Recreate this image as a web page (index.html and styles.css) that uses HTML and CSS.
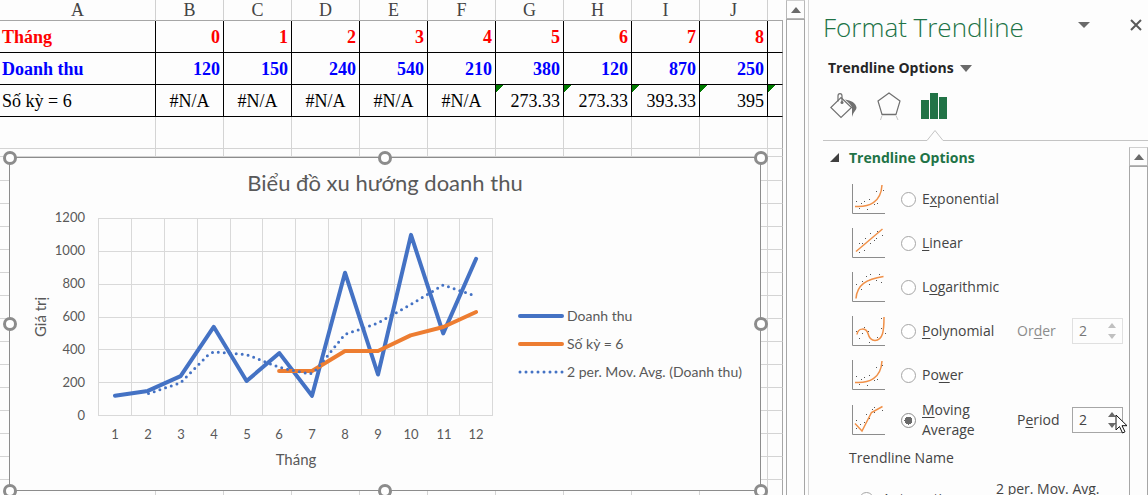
FILE: index.html
```html
<!DOCTYPE html>
<html lang="vi">
<head>
<meta charset="utf-8">
<title>Format Trendline</title>
<link rel="stylesheet" href="styles.css">
</head>
<body>
<div class="app">
  <main class="sheet">
    <table class="grid">
      <colgroup><col class="col-a"><col class="col"><col class="col"><col class="col"><col class="col"><col class="col"><col class="col"><col class="col"><col class="col"><col class="col"><col></colgroup>
      <thead>
        <tr><th>A</th><th>B</th><th>C</th><th>D</th><th>E</th><th>F</th><th>G</th><th>H</th><th>I</th><th>J</th><th></th></tr>
      </thead>
      <tbody>
        <tr class="data month"><td>Tháng</td><td>0</td><td>1</td><td>2</td><td>3</td><td>4</td><td>5</td><td>6</td><td>7</td><td>8</td><td></td></tr>
        <tr class="data revenue"><td>Doanh thu</td><td>120</td><td>150</td><td>240</td><td>540</td><td>210</td><td>380</td><td>120</td><td>870</td><td>250</td><td></td></tr>
        <tr class="data average"><td>Số kỳ = 6</td><td class="na">#N/A</td><td class="na">#N/A</td><td class="na">#N/A</td><td class="na">#N/A</td><td class="na">#N/A</td><td class="flag">273.33</td><td class="flag">273.33</td><td class="flag">393.33</td><td class="flag">395</td><td class="flag"></td></tr>
        <tr class="tall"><td></td><td></td><td></td><td></td><td></td><td></td><td></td><td></td><td></td><td></td><td></td></tr>
        <tr class="thin"><td></td><td></td><td></td><td></td><td></td><td></td><td></td><td></td><td></td><td></td><td></td></tr>
        <tr class="first"><td></td><td></td><td></td><td></td><td></td><td></td><td></td><td></td><td></td><td></td><td></td></tr>
        <tr><td></td><td></td><td></td><td></td><td></td><td></td><td></td><td></td><td></td><td></td><td></td></tr>
        <tr><td></td><td></td><td></td><td></td><td></td><td></td><td></td><td></td><td></td><td></td><td></td></tr>
        <tr><td></td><td></td><td></td><td></td><td></td><td></td><td></td><td></td><td></td><td></td><td></td></tr>
        <tr><td></td><td></td><td></td><td></td><td></td><td></td><td></td><td></td><td></td><td></td><td></td></tr>
        <tr><td></td><td></td><td></td><td></td><td></td><td></td><td></td><td></td><td></td><td></td><td></td></tr>
        <tr><td></td><td></td><td></td><td></td><td></td><td></td><td></td><td></td><td></td><td></td><td></td></tr>
        <tr><td></td><td></td><td></td><td></td><td></td><td></td><td></td><td></td><td></td><td></td><td></td></tr>
        <tr><td></td><td></td><td></td><td></td><td></td><td></td><td></td><td></td><td></td><td></td><td></td></tr>
        <tr><td></td><td></td><td></td><td></td><td></td><td></td><td></td><td></td><td></td><td></td><td></td></tr>
        <tr><td></td><td></td><td></td><td></td><td></td><td></td><td></td><td></td><td></td><td></td><td></td></tr>
        <tr><td></td><td></td><td></td><td></td><td></td><td></td><td></td><td></td><td></td><td></td><td></td></tr>
        <tr><td></td><td></td><td></td><td></td><td></td><td></td><td></td><td></td><td></td><td></td><td></td></tr>
        <tr><td></td><td></td><td></td><td></td><td></td><td></td><td></td><td></td><td></td><td></td><td></td></tr>
        <tr><td></td><td></td><td></td><td></td><td></td><td></td><td></td><td></td><td></td><td></td><td></td></tr>
      </tbody>
    </table>

    <section class="chart" aria-label="Biểu đồ xu hướng doanh thu">
      <h1 class="chart-title">Biểu đồ xu hướng doanh thu</h1>
      <div class="chart-body">
        <svg class="plot" width="486" height="276" viewBox="10 200 486 276" role="img" aria-label="Doanh thu">
          <path class="lines" d="M98.5 218v198M131.5 218v198M164.5 218v198M197.5 218v198M230.5 218v198M262.5 218v198M295.5 218v198M328.5 218v198M361.5 218v198M394.5 218v198M427.5 218v198M459.5 218v198M492.5 218v198M98 218.5h395M98 251.5h395M98 284.5h395M98 317.5h395M98 349.5h395M98 382.5h395M98 415.5h395"/>
          <g class="tick end">
            <text x="85" y="222">1200</text><text x="85" y="255">1000</text><text x="85" y="288">800</text><text x="85" y="321">600</text><text x="85" y="354">400</text><text x="85" y="387">200</text><text x="85" y="420">0</text>
          </g>
          <g class="tick mid">
            <text x="115" y="439">1</text><text x="148" y="439">2</text><text x="181" y="439">3</text><text x="214" y="439">4</text><text x="247" y="439">5</text><text x="279" y="439">6</text><text x="312" y="439">7</text><text x="345" y="439">8</text><text x="378" y="439">9</text><text x="411" y="439">10</text><text x="444" y="439">11</text><text x="476" y="439">12</text>
          </g>
          <text class="axis" x="296" y="465">Tháng</text>
          <text class="axis" transform="translate(46 317) rotate(-90)">Giá trị</text>
          <polyline class="series blue" points="115,395.8 147.8,390.9 180.6,376.1 213.7,326.8 246.6,381 279.4,353.1 312,395.8 345,272.7 378,374.5 411,234.9 443.2,333.4 476.1,258.8"/>
          <polyline class="series orange" points="279.1,371 312,371 345,351 378,351 410.6,335.4 443.3,327 476.1,312"/>
          <polyline class="series dots" points="148.5,393.6 180.6,382.8 208,355 214,351.8 246.3,354.5 279.1,367.3 310,374 316,370 344.8,334.5 377.6,323.2 410.4,304.7 443.2,285 476.1,296.2"/>
        </svg>
        <ul class="legend">
          <li><svg width="46" height="6" viewBox="0 0 46 6"><path class="series blue" d="M2 3h42"/></svg>Doanh thu</li>
          <li><svg width="46" height="6" viewBox="0 0 46 6"><path class="series orange" d="M2 3h42"/></svg>Số kỳ = 6</li>
          <li><svg width="46" height="6" viewBox="0 0 46 6"><path class="series dots" d="M2 3h43"/></svg>2 per. Mov. Avg. (Doanh thu)</li>
        </ul>
      </div>
      <i class="handle top left"></i><i class="handle top center"></i><i class="handle top right"></i>
      <i class="handle middle left"></i><i class="handle middle right"></i>
      <i class="handle bottom left"></i><i class="handle bottom center"></i><i class="handle bottom right"></i>
    </section>
  </main>

  <div class="scrollbar">
    <button type="button" class="scroll-up" aria-label="Scroll sheet up"><svg width="10" height="6" viewBox="0 0 10 6"><path d="M5 0l5 6H0z"/></svg></button>
    <div class="thumb"></div>
  </div>

  <aside class="pane">
    <header class="pane-head">
      <h2>Format Trendline</h2>
      <button type="button" class="menu" aria-label="Task pane options"><svg width="12" height="6" viewBox="0 0 12 6"><path d="M0 0h12L6 6z"/></svg></button>
      <button type="button" class="close" aria-label="Close"><svg width="12" height="12" viewBox="0 0 12 12"><path d="M1 1l10 10M11 1L1 11"/></svg></button>
    </header>
    <button type="button" class="picker">Trendline Options<svg width="12" height="7" viewBox="0 0 12 7"><path d="M0 0h12L6 7z"/></svg></button>
    <nav class="tabs">
      <button type="button" class="tab" aria-label="Fill &amp; Line">
        <svg width="27" height="28" viewBox="0 0 27 28"><g fill="none" stroke="#707070" stroke-width="1.2"><path d="M11 5.500L21.500 15.500 11 25.500.800 15.500z"/><path d="M8 9.500V4C8 .8 12 .8 12 4V10"/></g><circle cx="12" cy="10.500" r="1.500" fill="#707070"/><path d="M15 7.500c6 .8 11 3.500 11.500 8 0 3-3 4-4.500 9.500V15.500c-1-3-4-5-7-8z" fill="#707070"/></svg>
      </button>
      <button type="button" class="tab" aria-label="Effects">
        <svg width="26" height="28" viewBox="0 0 26 28"><path d="M13 1l11 8-4 13.500H6L2 9z" fill="none" stroke="#707070" stroke-width="1.200"/><path d="M6 22.500h14" stroke="#707070" stroke-width="1.500"/><path d="M6 23.500L4.500 28M20 23.500l2 4.500" stroke="#c4c4c4" fill="none"/></svg>
      </button>
      <button type="button" class="tab" aria-label="Trendline Options">
        <svg width="26" height="28" viewBox="0 0 26 28"><path d="M0 8h8v19H0zM9 1h8v26H9zM18 5h8v22h-8z" fill="#217346"/></svg>
      </button>
      <svg class="notch" width="18" height="12" viewBox="0 0 18 12"><path d="M0 11.500h1L9 1.500l8 10h1" /></svg>
    </nav>
    <div class="pane-body">
      <form class="options">
        <h3><svg width="10" height="10" viewBox="0 0 10 10"><path d="M9 0v9H0z"/></svg>Trendline Options</h3>
        <div class="option">
          <svg class="thumbnail" width="34" height="30" viewBox="0 0 34 30"><path class="frame" d="M.5 0v29.500H33"/><path class="curve" d="M3 22.500c14 1 26-4 27-21.500"/><path class="specks" d="M4 17.500h1M9 19.500h1M12 17.500h1M17 15.500h1M24 7.500h1M31 6.500h1M22 20.500h1M25 19.500h1M7 24.500h1M15 25.500h1"/></svg>
          <label><input type="radio" name="type"><span>E<u>x</u>ponential</span></label>
        </div>
        <div class="option">
          <svg class="thumbnail" width="34" height="30" viewBox="0 0 34 30"><path class="frame" d="M.5 0v29.500H33"/><path class="curve" d="M4 23.500L30.500 1"/><path class="specks" d="M7 15.500h1M10 15.500h1M13 10.500h1M18 5.500h1M25 3.500h1M30 7.500h1M24 10.500h1M22 12.500h1M18 15.500h1M12 22.500h1M7 24.500h1"/></svg>
          <label><input type="radio" name="type"><span><u>L</u>inear</span></label>
        </div>
        <div class="option">
          <svg class="thumbnail" width="34" height="30" viewBox="0 0 34 30"><path class="frame" d="M.5 0v29.500H33"/><path class="curve" d="M4 26.500C5 13 14 7 31.500 4.500"/><path class="specks" d="M4 12.500h1M10 9.500h1M14 4.500h1M18 2.500h1M27 2.500h1M29 10.500h1M24 8.500h1M17 12.500h1M9 17.500h1"/></svg>
          <label><input type="radio" name="type"><span>L<u>o</u>garithmic</span></label>
        </div>
        <div class="option">
          <svg class="thumbnail" width="34" height="30" viewBox="0 0 34 30"><path class="frame" d="M.5 0v29.500H33"/><path class="curve" d="M5 18.500c1-7 9-7 11-1 1 4 3 7 7 7 8 0 9-10 9-23.500"/><path class="specks" d="M4 15.500h1M12 11.500h1M16 15.500h1M10 17.500h1M7 22.500h1M17 26.500h1M25 21.500h1M29 12.500h1M29 2.500h1M33 17.500h1"/></svg>
          <label><input type="radio" name="type"><span><u>P</u>olynomial</span></label>
          <label class="amount off" for="order">Or<u>d</u>er</label>
          <div class="spinner off"><input id="order" type="text" value="2" disabled><div class="steps"><button type="button" disabled aria-label="Increase order"><svg width="8" height="5" viewBox="0 0 8 5"><path d="M4 0l4 5H0z"/></svg></button><button type="button" disabled aria-label="Decrease order"><svg width="8" height="5" viewBox="0 0 8 5"><path d="M0 0h8L4 5z"/></svg></button></div></div>
        </div>
        <div class="option">
          <svg class="thumbnail" width="34" height="30" viewBox="0 0 34 30"><path class="frame" d="M.5 0v29.500H33"/><path class="curve" d="M3 22.500c14 1 26-4 27-21.500"/><path class="specks" d="M4 16.500h1M9 19.500h1M12 17.500h1M17 15.500h1M24 7.500h1M30 5.500h1M22 20.500h1M25 19.500h1M7 24.500h1M15 25.500h1"/></svg>
          <label><input type="radio" name="type"><span>Po<u>w</u>er</span></label>
        </div>
        <div class="option two-line">
          <svg class="thumbnail" width="34" height="30" viewBox="0 0 34 30"><path class="frame" d="M.5 0v29.500H33"/><path class="curve" d="M3 18.500l7 7.500L19.500 7.500 30.500 1.500"/><path class="specks" d="M4 15.500h1M4 23.500h1M8 19.500h1M12 17.500h1M14 9.500h1M20 4.500h1M22 2.500h1M30 5.500h1M22 7.500h1M17 13.500h1"/></svg>
          <label><input type="radio" name="type" checked><span><u>M</u>oving Average</span></label>
          <label class="amount" for="period">P<u>e</u>riod</label>
          <div class="spinner"><input id="period" type="text" value="2"><div class="steps"><button type="button" aria-label="Increase period"><svg width="8" height="5" viewBox="0 0 8 5"><path d="M4 0l4 5H0z"/></svg></button><button type="button" aria-label="Decrease period"><svg width="8" height="5" viewBox="0 0 8 5"><path d="M0 0h8L4 5z"/></svg></button></div>
            <svg class="cursor" width="13" height="20" viewBox="0 0 13 20"><path d="M1 1v15l3.500-3.500L7.500 19l2.500-1.200-3-6.100h5z" fill="#fff" stroke="#111"/></svg>
          </div>
        </div>
        <h4>Trendline Name</h4>
        <div class="name-row">
          <label><input type="radio" name="name"><span><u>A</u>utomatic</span></label>
          <span class="name">2 per. Mov. Avg. (Doanh thu)</span>
        </div>
      </form>
      <div class="scrollbar side">
        <button type="button" class="scroll-up" aria-label="Scroll options up"><svg width="10" height="6" viewBox="0 0 10 6"><path d="M5 0l5 6H0z"/></svg></button>
        <div class="thumb"></div>
      </div>
    </div>
  </aside>
</div>
</body>
</html>
```
FILE: styles.css
```css
* { box-sizing: border-box; }
body { margin: 0; background: #fdfdfd; color: #444; font-family: "Open Sans", "Noto Sans", sans-serif; font-size: 14px; }
h1, h2, h3, h4, ul { margin: 0; padding: 0; font-weight: normal; }
button { border: 0; padding: 0; background: none; font: inherit; color: inherit; display: flex; align-items: center; justify-content: center; }
svg { display: block; flex: none; }
u { text-underline-offset: 2px; }

.app { display: flex; height: 100vh; overflow: hidden; }

/* worksheet */
.sheet { position: relative; flex: 1; min-width: 0; overflow: hidden; }
.grid { width: 100%; table-layout: fixed; border-collapse: separate; border-spacing: 0; font-family: "Liberation Serif", serif; font-size: 18px; line-height: 20px; }
.col-a { width: 156px; }
.col { width: 68px; }
.grid th { height: 21px; padding: 0; font-weight: normal; border-right: 1px solid #d0d0d0; border-bottom: 1px solid #a6a6a6; }
.grid td { height: 23px; padding: 0; border-right: 1px solid #d4d4d4; border-bottom: 1px solid #d4d4d4; }
.grid th:last-child { border-right: 0; }
.grid td:last-child { border-right-color: #a6a6a6; }
.grid .tall td { height: 32px; }
.grid .thin td { height: 8px; }
.grid .first td { height: 24px; }
.grid .data td { height: 32px; padding: 0 3px; border-color: #000; text-align: right; color: #000; }
.grid .data td:last-child { border-right-color: #a6a6a6; }
.grid .data td:first-child { padding: 0 2px; text-align: left; }
.grid .month td, .grid .revenue td { font-weight: bold; }
.grid .month td { color: #f00; }
.grid .revenue td { color: #00f; }
.grid .data .na { text-align: center; }
.grid .flag { background: linear-gradient(135deg, #007a00 5px, transparent 5px) no-repeat; }

/* chart floating over the cells */
.chart { position: absolute; left: 9px; top: 157px; right: 22px; height: 334px; background: #fdfdfd; border: 1px solid #8c8c8c; color: #595959; font-family: Lato, "Open Sans", sans-serif; display: flex; flex-direction: column; }
.chart-title { padding: 10px 0 2px; font-size: 22px; line-height: 30px; text-align: center; }
.chart-body { display: flex; gap: 22px; }
.plot { overflow: visible; }
.lines { stroke: #d9d9d9; fill: none; }
.tick { font-size: 13px; fill: #595959; }
.end { text-anchor: end; }
.mid { text-anchor: middle; }
.axis { font-size: 15px; fill: #595959; text-anchor: middle; }
.series { fill: none; stroke-width: 4; stroke-linecap: round; stroke-linejoin: round; }
.blue { stroke: #4472c4; }
.orange { stroke: #ed7d31; }
.dots { stroke: #4472c4; stroke-width: 3; stroke-dasharray: 0 6; }
.legend { list-style: none; padding-top: 102px; font-size: 14px; line-height: 28px; white-space: nowrap; }
.legend li { display: flex; align-items: center; gap: 3px; }
.handle { position: absolute; width: 14px; height: 14px; border: 3px solid #8c8c8c; border-radius: 50%; background: #fff; }
.top { top: -7px; }
.middle { top: calc(50% - 7px); }
.bottom { bottom: -8px; }
.left { left: -7px; }
.center { left: calc(50% - 7px); }
.right { right: -8px; }

/* scrollbars */
.scrollbar { display: flex; flex-direction: column; width: 19px; margin: 0 3px; }
.scroll-up { height: 19px; border: 1px solid #b8b8b8; border-top-color: #d0d0d0; fill: #6a6a6a; }
.thumb { flex: 1; border: 1px solid #a6a6a6; border-bottom: 0; }
.side { margin: 6px 0 0; }

/* task pane */
.pane { display: flex; flex-direction: column; width: 340px; padding-left: 14px; border-left: 1px solid #d4d4d4; }
.pane-head { display: flex; padding: 8px 6px 0 0; }
.pane-head h2 { flex: 1; color: #217346; font-size: 26px; font-weight: 300; line-height: 38px; white-space: nowrap; }
.pane-head button { height: 34px; }
.menu { fill: #6a6a6a; margin-right: 40px; }
.close { stroke: #5a5a5a; stroke-width: 2; }
.picker { align-self: flex-start; gap: 6px; margin: 11px 0 0 5px; color: #262626; fill: #6a6a6a; font-weight: bold; line-height: 22px; }
.tabs { position: relative; display: flex; gap: 19px; padding: 13px 0 20px 7px; border-bottom: 1px solid #c4c4c4; }
.notch { position: absolute; left: 103px; bottom: -1px; background: #fdfdfd; fill: none; stroke: #c4c4c4; }
.pane-body { display: flex; flex: 1; min-height: 0; }
.options { flex: 1; overflow: hidden; padding: 6px 6px 0 7px; line-height: 20px; }
.options h3 { display: flex; align-items: center; gap: 9px; height: 22px; margin-bottom: 8px; color: #217346; fill: #404040; font-size: 14px; font-weight: bold; }
.option { display: flex; align-items: center; height: 44px; padding-left: 22px; }
.option label:first-of-type { flex: 1; }
label { display: flex; align-items: center; gap: 6px; }
.thumbnail { margin-right: 15px; }
.frame { fill: none; stroke: #8c8c8c; }
.curve { fill: none; stroke: #f09048; stroke-width: 1.5; }
.specks { stroke: #555; }
input[type="radio"] { appearance: none; flex: none; width: 15px; height: 15px; margin: 0; border: 1px solid #a6a6a6; border-radius: 50%; background: #fff; }
input[type="radio"]:checked { border-color: #8c8c8c; background: radial-gradient(circle, #6a6a6a 4px, #fff 4px); }
.two-line { height: 46px; }
.two-line label:first-of-type { width: 80px; }
.option .amount { display: block; width: 55px; }
.off { color: #8c8c8c; }
.spinner { position: relative; display: flex; width: 51px; height: 26px; border: 1px solid #a6a6a6; }
.spinner input { width: 35px; padding: 0 0 0 6px; border: 0; background: none; color: #444; font: inherit; }
.steps { display: flex; flex-direction: column; justify-content: center; gap: 6px; fill: #6a6a6a; }
.spinner.off { border-color: #e0e0e0; }
.off .steps { fill: #c0c0c0; }
.spinner.off input { color: #777; }
.cursor { position: absolute; left: 42px; top: 6px; }
.options h4 { padding: 5px 0 11px 19px; font-size: 14px; }
.name-row { display: flex; align-items: center; padding-left: 29px; }
.name-row label { flex: 1; gap: 8px; }
.name { width: 127px; }
```
